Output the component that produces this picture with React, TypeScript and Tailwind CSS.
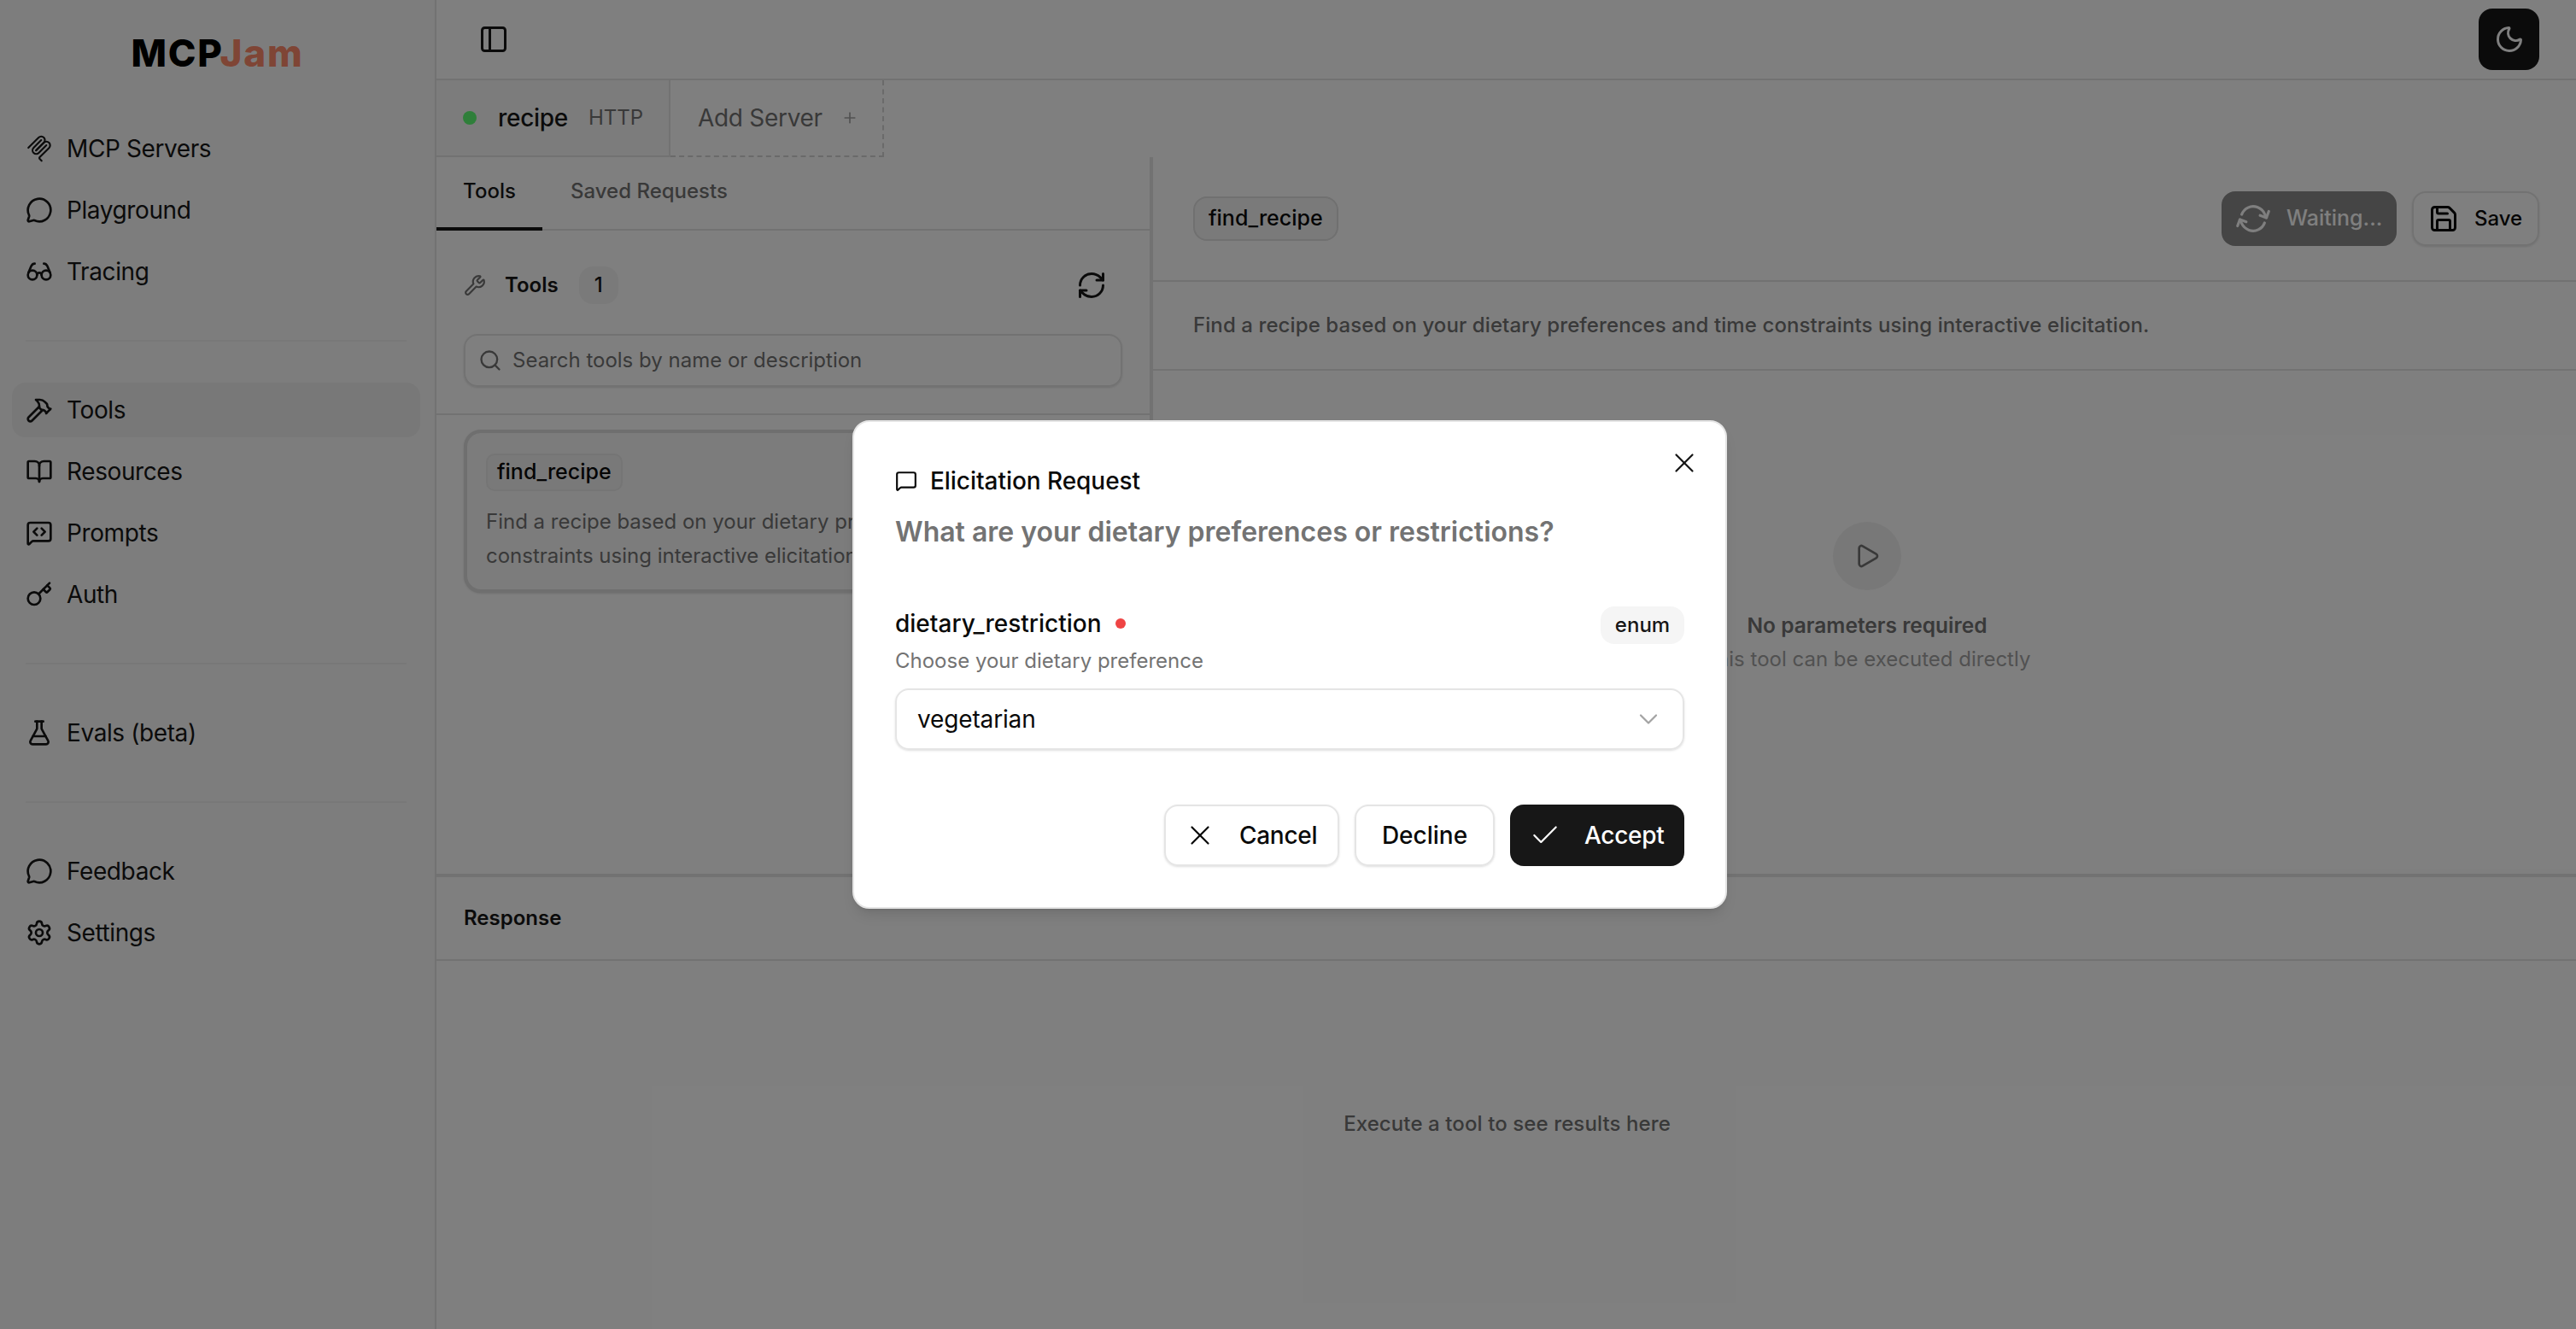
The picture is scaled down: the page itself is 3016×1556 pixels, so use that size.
import {
  BookOpen,
  Check,
  ChevronDown,
  FlaskConical,
  Glasses,
  Hammer,
  Key,
  MessageCircle,
  MessageSquare,
  MessageSquareCode,
  Moon,
  PanelLeft,
  Play,
  Plus,
  RefreshCw,
  Save,
  Search,
  Settings,
  Wrench,
  X,
  type LucideIcon,
} from "lucide-react";
import type { ComponentType } from "react";

type IconType = LucideIcon | ComponentType<{ className?: string }>;

const McpIcon = ({ className }: { className?: string }) => (
  <svg viewBox="0 0 180 180" fill="none" stroke="currentColor" strokeWidth="12" strokeLinecap="round" className={className}>
    <path d="M18 84.8528L85.8822 16.9706C95.2548 7.59798 110.451 7.59798 119.823 16.9706C129.196 26.3431 129.196 41.5391 119.823 50.9117L68.5581 102.177" />
    <path d="M69.2652 101.47L119.823 50.9117C129.196 41.5391 144.392 41.5391 153.765 50.9117L154.118 51.2652C163.491 60.6378 163.491 75.8338 154.118 85.2063L92.7248 146.6C89.6006 149.724 89.6006 154.789 92.7248 157.913L105.331 170.52" />
    <path d="M102.853 33.9411L52.6482 84.1457C43.2756 93.5183 43.2756 108.714 52.6482 118.087C62.0208 127.459 77.2167 127.459 86.5893 118.087L136.794 67.8822" />
  </svg>
);

const NavItem = ({ icon: Icon, label, active }: { icon: IconType; label: string; active?: boolean }) => (
  <div className={`flex h-[64px] items-center gap-[16px] rounded-[16px] px-[16px] text-[28px] tracking-[-0.4px] text-[#171717] ${active ? "bg-[#f0f0f0]" : ""}`}>
    <Icon className="size-[32px] shrink-0" />
    <span>{label}</span>
  </div>
);

const Divider = () => <div className="mx-[16px] my-[48px] h-[2px] bg-[#f0f0f0]" />;

const Sidebar = () => (
  <aside className="flex w-[511px] shrink-0 flex-col border-r-2 border-[#e5e5e5] bg-[#fafafa]">
    <div className="flex h-[142px] justify-center pt-[32px]">
      <span className="text-[44px] leading-[60px] font-extrabold tracking-[1.8px]">
        <span className="text-black">MCP</span>
        <span className="text-[#fe8a6b]">Jam</span>
      </span>
    </div>
    <nav className="flex flex-col pr-[17px] pl-[14px]">
      <div className="flex flex-col gap-[8px]">
        <NavItem icon={McpIcon} label="MCP Servers" />
        <NavItem icon={MessageCircle} label="Playground" />
        <NavItem icon={Glasses} label="Tracing" />
      </div>
      <Divider />
      <div className="flex flex-col gap-[8px]">
        <NavItem icon={Hammer} label="Tools" active />
        <NavItem icon={BookOpen} label="Resources" />
        <NavItem icon={MessageSquareCode} label="Prompts" />
        <NavItem icon={Key} label="Auth" />
      </div>
      <Divider />
      <NavItem icon={FlaskConical} label="Evals (beta)" />
      <Divider />
      <div className="flex flex-col gap-[8px]">
        <NavItem icon={MessageCircle} label="Feedback" />
        <NavItem icon={Settings} label="Settings" />
      </div>
    </nav>
  </aside>
);

const TopBar = () => (
  <header className="flex h-[94px] shrink-0 items-center justify-between border-b-2 border-[#e5e5e5] pr-[43px] pl-[49px]">
    <PanelLeft className="size-[36px] text-[#171717]" />
    <button className="flex h-[72px] w-[71px] items-center justify-center rounded-[16px] bg-[#171717] text-white">
      <Moon className="size-[36px]" />
    </button>
  </header>
);

const ServerTabs = () => (
  <div className="flex h-[90px] shrink-0">
    <div className="flex w-[274px] items-center border-r-2 border-b-2 border-[#e5e5e5] bg-[#f8f8f8] pl-[31px]">
      <span className="size-[16px] rounded-full bg-[#5efe74]" />
      <span className="ml-[25px] text-[28px] font-medium tracking-[-0.3px] text-[#171717]">recipe</span>
      <span className="ml-[24px] text-[24px] text-[#737373]">HTTP</span>
    </div>
    <div className="flex w-[250px] items-center border-r-2 border-b-2 border-dashed border-[#d4d4d4] pl-[32px]">
      <span className="text-[28px] tracking-[-0.3px] text-[#737373]">Add Server</span>
      <Plus className="ml-[22px] size-[20px] text-[#a3a3a3]" />
    </div>
  </div>
);

const ToolsPanel = () => (
  <section className="flex w-[835px] shrink-0 flex-col">
    <div className="flex h-[86px] shrink-0 items-stretch border-b-2 border-[#e5e5e5]">
      <div className="relative flex w-[124px] items-center justify-center pb-[4px] text-[24px] font-medium text-[#171717]">
        Tools
        <span className="absolute right-0 -bottom-[2px] left-0 h-[4px] bg-[#171717]" />
      </div>
      <div className="flex items-center pb-[4px] pl-[33px] text-[24px] font-medium text-[#737373]">Saved Requests</div>
    </div>
    <div className="flex h-[216px] shrink-0 flex-col border-b-2 border-[#e5e5e5] px-[32px] pt-[42px]">
      <div className="flex h-[44px] items-center">
        <Wrench className="size-[26px] text-[#737373]" />
        <span className="ml-[22px] text-[24px] font-semibold text-[#171717]">Tools</span>
        <span className="ml-[24px] flex h-[44px] w-[46px] items-center justify-center rounded-[16px] bg-[#f5f5f5] text-[24px] font-medium text-[#171717]">1</span>
        <RefreshCw className="mr-[18px] ml-auto size-[36px] text-[#171717]" />
      </div>
      <div className="mt-[35px] flex h-[62px] items-center gap-[12px] rounded-[16px] border-2 border-[#e5e5e5] px-[15px] shadow-sm">
        <Search className="size-[28px] text-[#737373]" />
        <span className="text-[24px] text-[#737373]">Search tools by name or description</span>
      </div>
    </div>
    <div className="px-[32px] pt-[17px]">
      <div className="rounded-[20px] border-4 border-[#dedede] bg-[#f8f8f8] px-[22px] pt-[24px] pb-[19px] shadow-sm">
        <span className="flex h-[44px] w-fit items-center rounded-[10px] border-2 border-[#eaeaea] bg-[#f3f3f3] px-[11px] text-[25px] font-medium text-[#0a0a0a]">find_recipe</span>
        <p className="mt-[16px] text-[24px] leading-[40px] text-[#737373]">
          Find a recipe based on your dietary preferences and time constraints using interactive elicitation.
        </p>
      </div>
    </div>
  </section>
);

const DetailPanel = () => (
  <section className="flex min-w-0 flex-1 flex-col">
    <div className="flex h-[146px] shrink-0 items-center justify-between border-b-2 border-[#e5e5e5] pr-[43px] pl-[47px]">
      <span className="flex h-[52px] items-center rounded-[16px] border-2 border-[#e0e0e0] bg-[#f5f5f5] px-[16px] text-[25px] font-medium text-[#0a0a0a]">find_recipe</span>
      <div className="flex gap-[18px]">
        <button className="flex h-[64px] w-[205px] items-center gap-[20px] rounded-[16px] bg-[#171717] pl-[18px] text-[25px] font-medium text-white opacity-50">
          <RefreshCw className="size-[38px] rotate-[20deg]" />
          Waiting...
        </button>
        <button className="flex h-[64px] w-[149px] items-center gap-[18px] rounded-[16px] border-2 border-[#e5e5e5] pl-[17px] text-[24px] font-medium text-[#0a0a0a] shadow-sm">
          <Save className="size-[36px]" />
          Save
        </button>
      </div>
    </div>
    <div className="flex h-[104px] shrink-0 items-center border-b-2 border-[#e5e5e5] pl-[47px] text-[24px] font-medium tracking-[0.09px] text-[#737373]">
      Find a recipe based on your dietary preferences and time constraints using interactive elicitation.
    </div>
    <div className="flex flex-1 flex-col items-center pt-[177px] pl-[6px]">
      <div className="flex size-[80px] items-center justify-center rounded-full bg-[#f0f0f0]">
        <Play className="size-[32px] text-[#737373]" />
      </div>
      <p className="mt-[23px] text-[24.5px] font-semibold text-[#737373]">No parameters required</p>
      <p className="mt-[3px] text-[24px] text-[#a3a3a3]">This tool can be executed directly</p>
    </div>
  </section>
);

const ResponsePanel = () => (
  <>
    <div className="flex h-[98px] shrink-0 items-center border-b-2 border-[#e5e5e5] pl-[32px] text-[24px] font-semibold text-[#171717]">
      Response
    </div>
    <div className="flex flex-1 items-center justify-center pb-[50px] pl-[2px] text-[24px] font-medium tracking-[0.1px] text-[#737373]">
      Execute a tool to see results here
    </div>
  </>
);

const ElicitationModal = () => (
  <div className="absolute top-[492px] left-[998px] w-[1024px] rounded-[20px] border-2 border-[#e5e5e5] bg-white p-[48px] shadow-lg">
    <X className="absolute top-[29px] right-[29px] size-[38px] text-[#171717]" strokeWidth={1.4} />
    <div className="flex h-[42px] items-center gap-[15px] text-[28px] font-medium tracking-[-0.05px] text-[#0a0a0a]">
      <MessageSquare className="size-[26px]" />
      Elicitation Request
    </div>
    <h2 className="mt-[15px] text-[32px] leading-[48px] font-semibold text-[#737373]">
      What are your dietary preferences or restrictions?
    </h2>
    <div className="mt-[63px] flex items-start justify-between">
      <div>
        <div className="flex items-center gap-[16px]">
          <span className="text-[28px] leading-[40px] font-medium text-[#0a0a0a]">dietary_restriction</span>
          <span className="size-[12px] rounded-full bg-[#ef4444]" />
        </div>
        <p className="mt-[8px] text-[24px] leading-[32px] text-[#737373]">Choose your dietary preference</p>
      </div>
      <span className="flex h-[44px] w-[98px] items-center justify-center rounded-[16px] bg-[#f5f5f5] text-[24px] font-medium text-[#171717]">enum</span>
    </div>
    <div className="mt-[16px] flex h-[72px] items-center justify-between rounded-[16px] border-2 border-[#e5e5e5] pr-[22px] pl-[24px] text-[28px] tracking-[-0.15px] text-[#0a0a0a] shadow-sm">
      vegetarian
      <ChevronDown className="size-[36px] text-[#a3a3a3]" strokeWidth={1.5} />
    </div>
    <div className="mt-[64px] flex justify-end gap-[18px]">
      <button className="flex h-[72px] w-[205px] items-center gap-[27px] rounded-[16px] border-2 border-[#e5e5e5] pl-[21px] text-[28px] font-medium tracking-[-0.3px] text-[#0a0a0a] shadow-sm">
        <X className="size-[38px]" strokeWidth={1.4} />
        Cancel
      </button>
      <button className="flex h-[72px] w-[164px] items-center justify-center rounded-[16px] border-2 border-[#e5e5e5] text-[28px] font-medium text-[#0a0a0a] shadow-sm">
        Decline
      </button>
      <button className="flex h-[72px] w-[204px] items-center gap-[27px] rounded-[16px] bg-[#171717] pl-[22px] text-[28px] font-medium tracking-[-0.3px] text-white">
        <Check className="size-[38px]" strokeWidth={1.4} />
        Accept
      </button>
    </div>
  </div>
);

const App = () => (
  <div className="relative flex h-screen w-full overflow-hidden bg-white font-['Inter',sans-serif]">
    <Sidebar />
    <main className="flex min-w-0 flex-1 flex-col">
      <TopBar />
      <ServerTabs />
      <div className="flex h-[839px] shrink-0">
        <ToolsPanel />
        <div className="w-[4px] shrink-0 bg-[#e5e5e5]" />
        <DetailPanel />
      </div>
      <div className="h-[4px] shrink-0 bg-[#e5e5e5]" />
      <ResponsePanel />
    </main>
    <div className="absolute inset-0 bg-black/50" />
    <ElicitationModal />
  </div>
);

export default App;
